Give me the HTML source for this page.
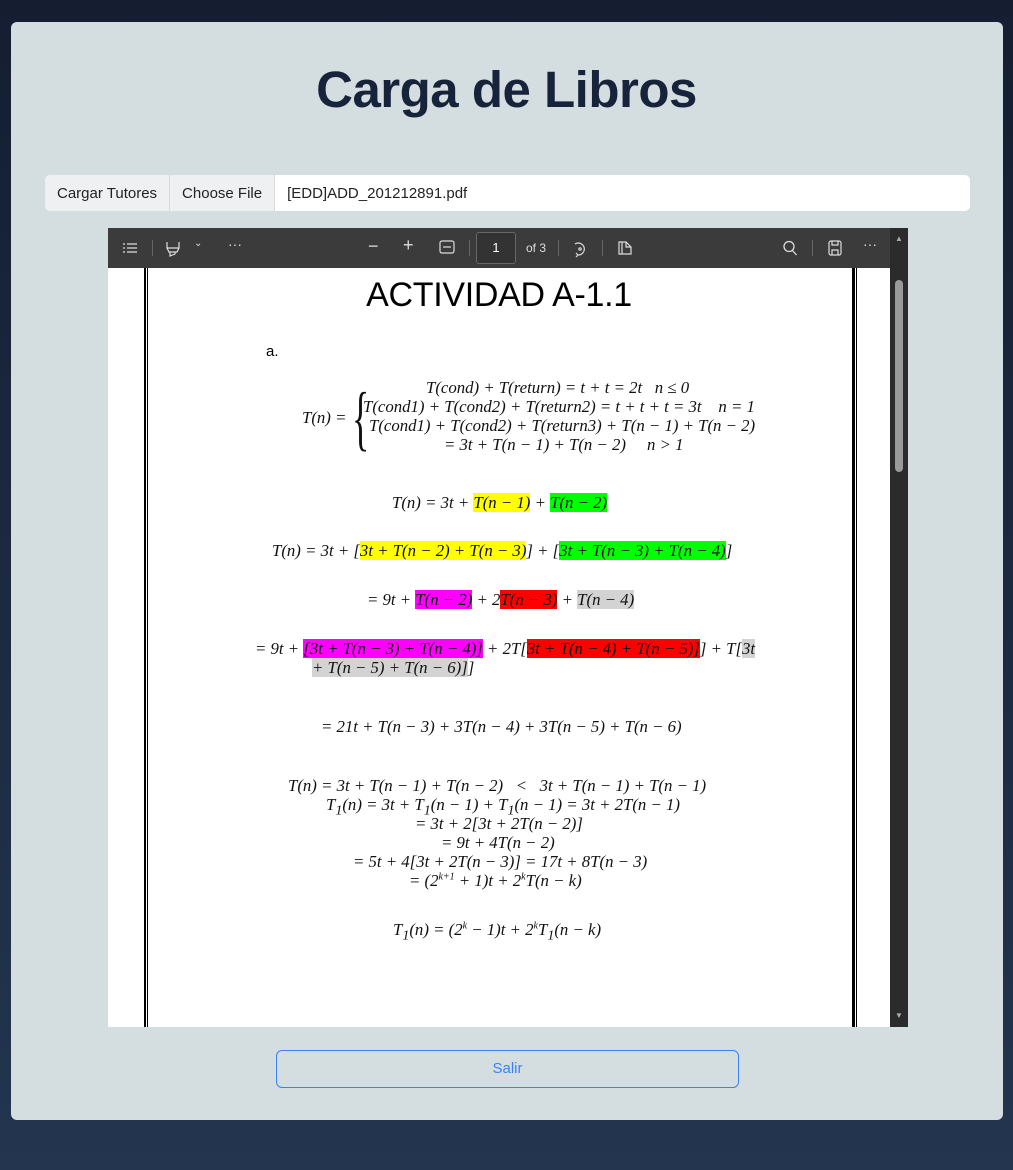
<!DOCTYPE html>
<html><head><meta charset="utf-8"><style>
*{margin:0;padding:0;box-sizing:border-box}
body{width:1013px;height:1170px;background:linear-gradient(#151e31,#23354f);font-family:"Liberation Sans",sans-serif;position:relative;overflow:hidden}
.card{position:absolute;left:11px;top:22px;width:992px;height:1098px;background:#d4dde0;border-radius:6px}
h1{position:absolute;left:0;width:1013px;top:60px;text-align:center;font-size:51px;font-weight:bold;color:#17233b;letter-spacing:-0.5px}
.ig{position:absolute;left:45px;top:175px;width:925px;height:36px;background:#fff;border-radius:5px;display:flex;font-size:15px;color:#222}
.ig div{display:flex;align-items:center;padding:0 12px}
.ig .a{background:#eef0f2;border-right:1px solid #d6dadd;border-radius:5px 0 0 5px}
.ig .b{background:#eef0f2;border-right:1px solid #d6dadd}
.pdf{position:absolute;left:108px;top:228px;width:800px;height:799px;background:#fff;overflow:hidden}
.tb{position:absolute;left:0;top:0;width:782px;height:40px;background:#3b3b3b;color:#ddd;font-size:13px}
.sb{position:absolute;left:782px;top:0;width:18px;height:799px;background:#2b2b2b}
.thumb{position:absolute;left:5px;top:52px;width:8px;height:192px;background:#9a9a9a;border-radius:4px}
.m{position:absolute;font-family:"Liberation Serif",serif;font-style:italic;font-size:16.8px;color:#111;white-space:nowrap}
.y{background:#ffff00}.g{background:#00ff00}.p{background:#ff00ff}.r{background:#ff0000}.gr{background:#d3d3d3}
.btn{position:absolute;left:276px;top:1050px;width:463px;height:38px;border:1px solid #3b82f6;border-radius:6px;color:#3b82f6;text-align:center;line-height:36px;font-size:15px}
.ic{position:absolute;top:12px;color:#ddd}
</style></head><body>
<div class="card"></div>
<h1>Carga de Libros</h1>
<div class="ig"><div class="a">Cargar Tutores</div><div class="b">Choose File</div><div>[EDD]ADD_201212891.pdf</div></div>
<div class="pdf">
<div class="tb">
<svg class="ic" style="left:14px" width="16" height="16" viewBox="0 0 16 16" fill="none" stroke="#ddd" stroke-width="1.2"><path d="M1 4h2M5 4h10M1 8h2M5 8h10M1 12h2M5 12h10"/></svg>
<div style="position:absolute;left:44px;top:12px;width:1px;height:16px;background:#666"></div>
<svg class="ic" style="left:56px" width="18" height="18" viewBox="0 0 18 18" fill="none" stroke="#ddd" stroke-width="1.2"><path d="M3 2v6h12V2M3 8l2 4h8l2-4M6 12v4l5-2v-2"/></svg>
<span class="ic" style="left:86px;top:10px;font-size:10px">⌄</span>
<span class="ic" style="left:120px;top:8px;font-size:14px">···</span>
<span class="ic" style="left:260px;top:8px;font-size:18px">−</span>
<span class="ic" style="left:295px;top:7px;font-size:18px">+</span>
<svg class="ic" style="left:331px" width="16" height="14" viewBox="0 0 16 14" fill="none" stroke="#ddd" stroke-width="1.2"><rect x="1" y="1" width="14" height="12" rx="2"/><path d="M4 7h8"/></svg>
<div style="position:absolute;left:361px;top:12px;width:1px;height:16px;background:#666"></div>
<div style="position:absolute;left:368px;top:4px;width:40px;height:32px;border:1px solid #666;border-radius:3px;background:#333;color:#fff;text-align:center;line-height:30px">1</div>
<span class="ic" style="left:418px;top:13px;font-size:12px">of 3</span>
<div style="position:absolute;left:450px;top:12px;width:1px;height:16px;background:#666"></div>
<svg class="ic" style="left:464px" width="16" height="18" viewBox="0 0 16 18" fill="none" stroke="#ddd" stroke-width="1.2"><path d="M3 4a6 6 0 1 1 3 11M6 15l-2 2M6 15l-2-2"/><circle cx="8" cy="9" r="1.2"/></svg>
<div style="position:absolute;left:494px;top:12px;width:1px;height:16px;background:#666"></div>
<svg class="ic" style="left:509px" width="16" height="16" viewBox="0 0 16 16" fill="none" stroke="#ddd" stroke-width="1.2"><path d="M2 2h7l5 5v7H2zM9 2v5h5M5 2v12"/></svg>
<svg class="ic" style="left:674px" width="16" height="16" viewBox="0 0 16 16" fill="none" stroke="#ddd" stroke-width="1.3"><circle cx="7" cy="6.5" r="5"/><path d="M10.5 10.5l4 4.5"/></svg>
<div style="position:absolute;left:704px;top:12px;width:1px;height:16px;background:#666"></div>
<svg class="ic" style="left:719px" width="16" height="16" viewBox="0 0 16 16" fill="none" stroke="#ddd" stroke-width="1.2"><rect x="2" y="1" width="12" height="14" rx="2"/><path d="M5 1v4h6V1M5 15v-5h6v5"/></svg>
<span class="ic" style="left:755px;top:8px;font-size:14px">···</span>
</div>
<div class="sb"><div style="position:absolute;left:5px;top:6px;color:#aaa;font-size:8px">▲</div><div class="thumb"></div><div style="position:absolute;left:5px;top:783px;color:#aaa;font-size:8px">▼</div></div>
<div style="position:absolute;left:36px;top:40px;width:4px;height:760px;border-left:2px solid #000;border-right:1px solid #000"></div>
<div style="position:absolute;left:744px;top:40px;width:5px;height:760px;border-left:3px solid #000;border-right:1px solid #000"></div>
<div style="position:absolute;left:0;width:782px;top:48px;text-align:center;font-size:34px;letter-spacing:-0.3px;color:#000">ACTIVIDAD A-1.1</div>
<div style="position:absolute;left:158px;top:115px;font-size:15px">a.</div>
<div class="m" style="left:194px;top:180px">T(n) =</div>
<div class="m" style="left:244px;top:154px;font-size:72px;font-style:normal;line-height:72px;transform:scaleX(.5);transform-origin:left">{</div>
<div class="m" style="left:318px;top:150px">T(cond) + T(return) = t + t = 2t &nbsp;&nbsp;n ≤ 0</div>
<div class="m" style="left:255px;top:169px">T(cond1) + T(cond2) + T(return2) = t + t + t = 3t &nbsp;&nbsp;&nbsp;n = 1</div>
<div class="m" style="left:261px;top:188px">T(cond1) + T(cond2) + T(return3) + T(n − 1) + T(n − 2)</div>
<div class="m" style="left:336px;top:207px">= 3t + T(n − 1) + T(n − 2) &nbsp;&nbsp;&nbsp;&nbsp;n &gt; 1</div>
<div class="m" style="left:284px;top:265px">T(n) = 3t + <span class="y">T(n − 1)</span> + <span class="g">T(n − 2)</span></div>
<div class="m" style="left:164px;top:313px">T(n) = 3t + [<span class="y">3t + T(n − 2) + T(n − 3)</span>] + [<span class="g">3t + T(n − 3) + T(n − 4)</span>]</div>
<div class="m" style="left:259px;top:362px">= 9t + <span class="p">T(n − 2)</span> + 2<span class="r">T(n − 3)</span> + <span class="gr">T(n − 4)</span></div>
<div class="m" style="left:147px;top:411px">= 9t + <span class="p">[3t + T(n − 3) + T(n − 4)]</span> + 2T[<span class="r">3t + T(n − 4) + T(n − 5)]</span>] + T[<span class="gr">3t</span></div>
<div class="m" style="left:204px;top:430px"><span class="gr">+ T(n − 5) + T(n − 6)]</span>]</div>
<div class="m" style="left:213px;top:489px">= 21t + T(n − 3) + 3T(n − 4) + 3T(n − 5) + T(n − 6)</div>
<div class="m" style="left:180px;top:548px">T(n) = 3t + T(n − 1) + T(n − 2) &nbsp;&nbsp;&lt; &nbsp;&nbsp;3t + T(n − 1) + T(n − 1)</div>
<div class="m" style="left:218px;top:567px">T<sub>1</sub>(n) = 3t + T<sub>1</sub>(n − 1) + T<sub>1</sub>(n − 1) = 3t + 2T(n − 1)</div>
<div class="m" style="left:307px;top:586px">= 3t + 2[3t + 2T(n − 2)]</div>
<div class="m" style="left:333px;top:605px">= 9t + 4T(n − 2)</div>
<div class="m" style="left:245px;top:624px">= 5t + 4[3t + 2T(n − 3)] = 17t + 8T(n − 3)</div>
<div class="m" style="left:301px;top:643px">= (2<sup style="font-size:10px">k+1</sup> + 1)t + 2<sup style="font-size:10px">k</sup>T(n − k)</div>
<div class="m" style="left:285px;top:692px">T<sub>1</sub>(n) = (2<sup style="font-size:10px">k</sup> − 1)t + 2<sup style="font-size:10px">k</sup>T<sub>1</sub>(n − k)</div>
</div>
<div class="btn">Salir</div>
</body></html>
